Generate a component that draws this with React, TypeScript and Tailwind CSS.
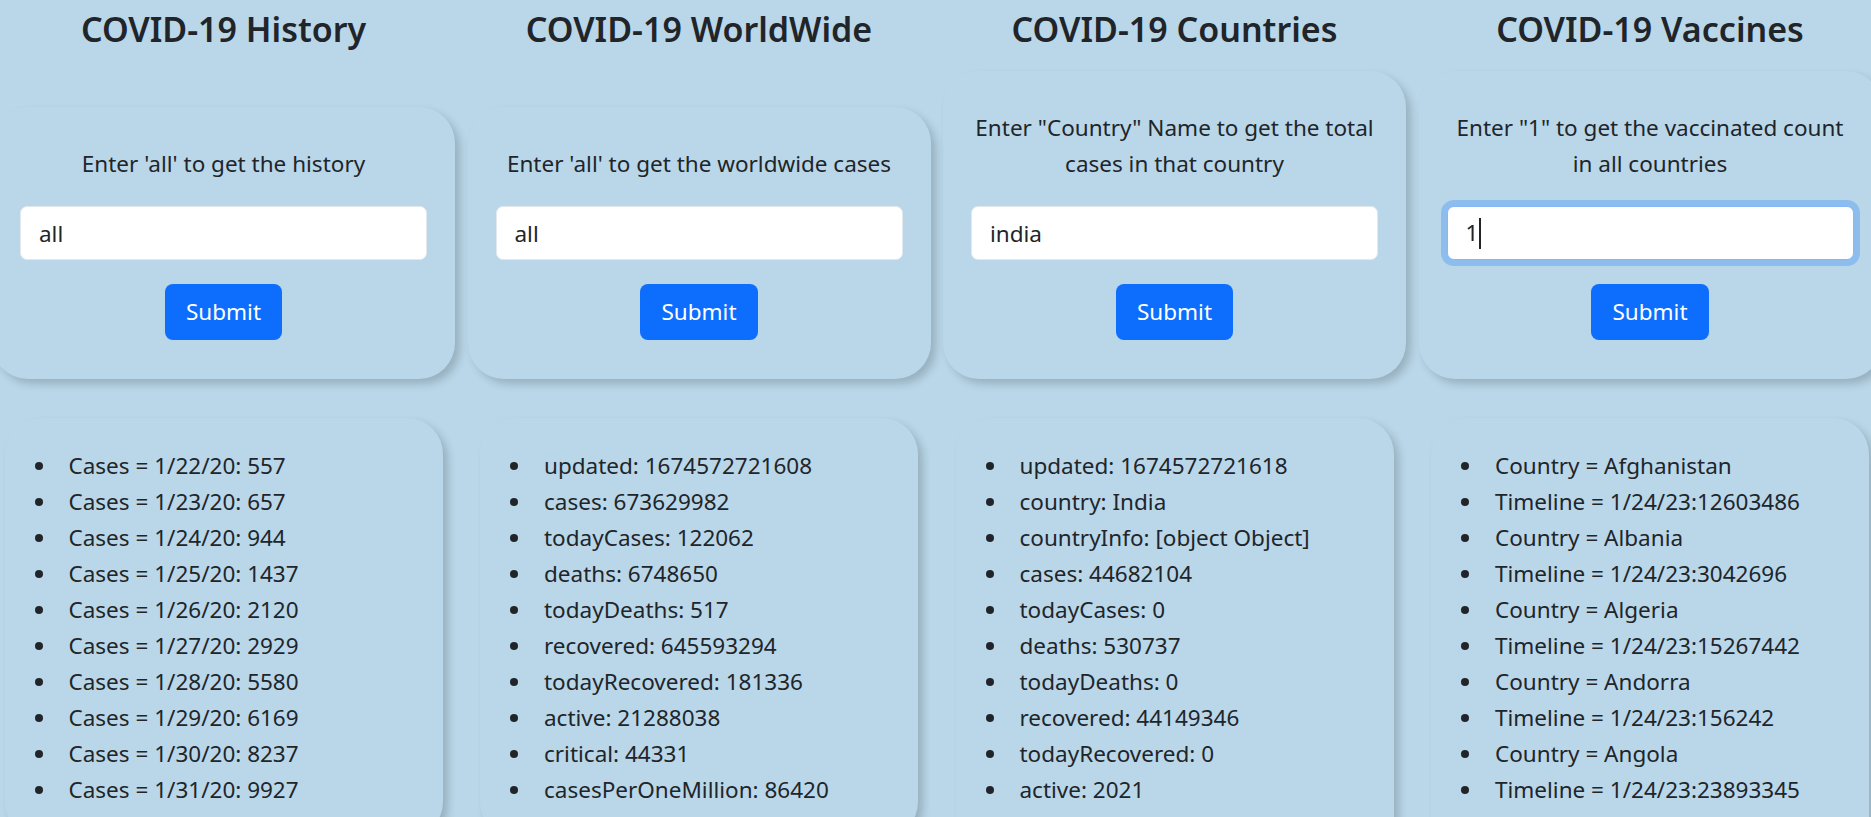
import React from 'react';

type Panel = {
  title: string;
  prompt: string;
  value: string;
  focused?: boolean;
  items: string[];
};

const panels: Panel[] = [
  {
    title: 'COVID-19 History',
    prompt: "Enter 'all' to get the history",
    value: 'all',
    items: [
      'Cases = 1/22/20: 557',
      'Cases = 1/23/20: 657',
      'Cases = 1/24/20: 944',
      'Cases = 1/25/20: 1437',
      'Cases = 1/26/20: 2120',
      'Cases = 1/27/20: 2929',
      'Cases = 1/28/20: 5580',
      'Cases = 1/29/20: 6169',
      'Cases = 1/30/20: 8237',
      'Cases = 1/31/20: 9927',
    ],
  },
  {
    title: 'COVID-19 WorldWide',
    prompt: "Enter 'all' to get the worldwide cases",
    value: 'all',
    items: [
      'updated: 1674572721608',
      'cases: 673629982',
      'todayCases: 122062',
      'deaths: 6748650',
      'todayDeaths: 517',
      'recovered: 645593294',
      'todayRecovered: 181336',
      'active: 21288038',
      'critical: 44331',
      'casesPerOneMillion: 86420',
    ],
  },
  {
    title: 'COVID-19 Countries',
    prompt: 'Enter "Country" Name to get the total cases in that country',
    value: 'india',
    items: [
      'updated: 1674572721618',
      'country: India',
      'countryInfo: [object Object]',
      'cases: 44682104',
      'todayCases: 0',
      'deaths: 530737',
      'todayDeaths: 0',
      'recovered: 44149346',
      'todayRecovered: 0',
      'active: 2021',
      'critical: 0',
    ],
  },
  {
    title: 'COVID-19 Vaccines',
    prompt: 'Enter "1" to get the vaccinated count in all countries',
    value: '1',
    focused: true,
    items: [
      'Country = Afghanistan',
      'Timeline = 1/24/23:12603486',
      'Country = Albania',
      'Timeline = 1/24/23:3042696',
      'Country = Algeria',
      'Timeline = 1/24/23:15267442',
      'Country = Andorra',
      'Timeline = 1/24/23:156242',
      'Country = Angola',
      'Timeline = 1/24/23:23893345',
      'Country = Anguilla',
    ],
  },
];

function SearchCard({ panel }: { panel: Panel }) {
  return (
    <div className="rounded-[36px] bg-[#b9d7e9] px-[28px] pt-[39px] pb-[39px] shadow-[5px_5px_8px_rgba(0,0,0,0.18)] flex flex-col items-center">
      <p className="text-center text-[22.5px] leading-[36px] mb-[24px]">{panel.prompt}</p>
      {panel.focused ? (
        <div className="w-full h-[54px] bg-white rounded-[7px] border-[1.5px] border-[#86b7fe] shadow-[0_0_0_6px_rgba(13,110,253,0.25)] px-[18px] flex items-center text-[22.5px]">
          <span>{panel.value}</span>
          <span className="w-[1.5px] h-[31px] bg-[#212529] ml-[1px]" />
        </div>
      ) : (
        <input
          readOnly
          value={panel.value}
          className="w-full h-[54px] bg-white rounded-[7px] border border-[#e3e8ec] px-[18px] text-[22.5px] text-[#212529] outline-none"
        />
      )}
      <button className="mt-[24px] h-[56px] px-[21px] rounded-[8px] bg-[#0d6efd] text-white text-[22.5px]">
        Submit
      </button>
    </div>
  );
}

function ResultCard({ items }: { items: string[] }) {
  return (
    <div className="mx-[12.5px] rounded-[36px] bg-[#b9d7e9] pt-[30px] pb-[30px] shadow-[5px_5px_8px_rgba(0,0,0,0.18)]">
      <ul>
        {items.map((item) => (
          <li key={item} className="flex items-center h-[36px] text-[22.5px] whitespace-nowrap">
            <span className="w-[8px] h-[8px] rounded-full bg-[#212529] ml-[30px] mr-[26px] shrink-0" />
            {item}
          </li>
        ))}
      </ul>
    </div>
  );
}

export default function App() {
  return (
    <div className="w-full h-[817px] overflow-hidden bg-[#b9d7e9] text-[#212529] font-['Noto_Sans',sans-serif]">
      <div className="flex gap-[12.5px] ml-[-8px]">
        {panels.map((panel) => (
          <div key={panel.title} className="w-[463px] shrink-0 flex flex-col">
            <h2 className="h-[60px] pt-[8px] text-center text-[34px] leading-[43px] font-semibold">
              {panel.title}
            </h2>
            <div className="h-[319px] flex flex-col justify-end">
              <SearchCard panel={panel} />
            </div>
            <div className="mt-[39px]">
              <ResultCard items={panel.items} />
            </div>
          </div>
        ))}
      </div>
    </div>
  );
}
